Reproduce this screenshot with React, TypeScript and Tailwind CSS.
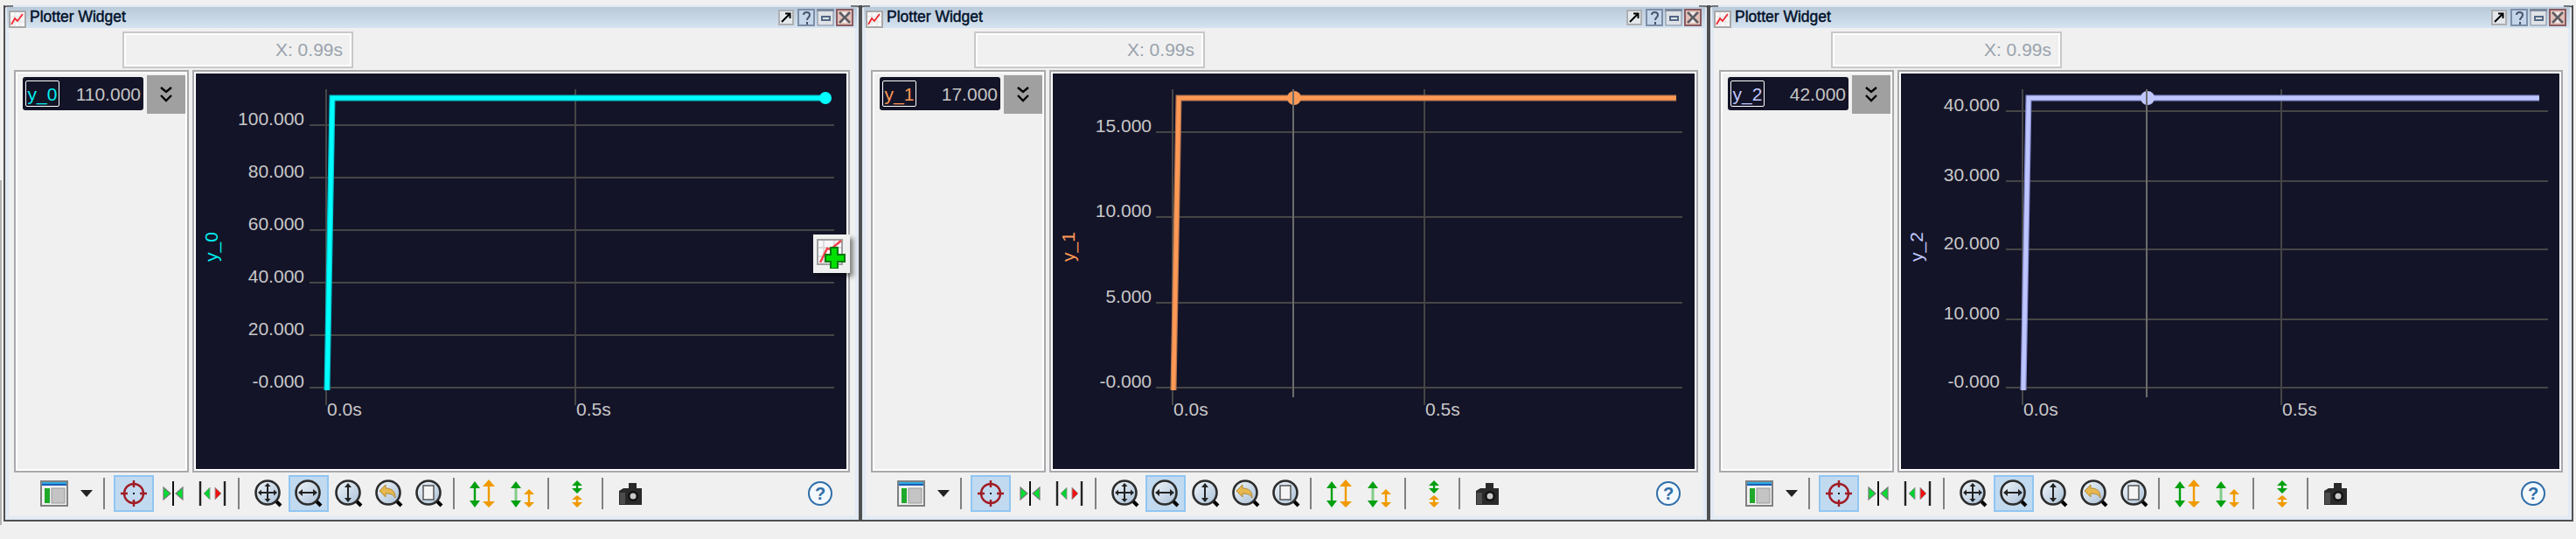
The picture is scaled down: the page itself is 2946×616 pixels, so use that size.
import React from "react";

const DARK = "#141428";

type Tick = [string, number];
type PanelData = {
  name: string;
  value: string;
  color: string;
  edge: string;
  labelColor: string;
  widthClass: string;
  xBoxClass: string;
  darkLeft: number;
  darkWidth: number;
  axisX: number;
  midX: number;
  endX: number;
  gridRight: number;
  gridLeft: number;
  labelRight: number;
  cross?: number;
  dotX: number;
  dotR: number;
  ticks: Tick[];
};

const panels: PanelData[] = [
  {
    name: "y_0", value: "110.000", color: "#00ffff", edge: "#00c4d0", labelColor: "#00f0f0",
    widthClass: "w-[980px]", xBoxClass: "ml-[130px]",
    darkLeft: 224, darkWidth: 744, axisX: 373, midX: 658, endX: 944, gridRight: 954, gridLeft: 354, labelRight: 348,
    dotX: 944, dotR: 7,
    ticks: [["100.000", 143], ["80.000", 203], ["60.000", 263], ["40.000", 323], ["20.000", 383], ["-0.000", 443]],
  },
  {
    name: "y_1", value: "17.000", color: "#ff9955", edge: "#b87850", labelColor: "#ff9955",
    widthClass: "w-[970px]", xBoxClass: "ml-[124px]",
    darkLeft: 1204, darkWidth: 735, axisX: 1341, midX: 1629, endX: 1917, gridRight: 1924, gridLeft: 1322, labelRight: 1317,
    cross: 1479, dotX: 1480, dotR: 8,
    ticks: [["15.000", 151], ["10.000", 248], ["5.000", 346], ["-0.000", 443]],
  },
  {
    name: "y_2", value: "42.000", color: "#bfc6ff", edge: "#8a90d4", labelColor: "#c0c8ff",
    widthClass: "w-[989px]", xBoxClass: "ml-[134px]",
    darkLeft: 2174, darkWidth: 754, axisX: 2313, midX: 2609, endX: 2904, gridRight: 2914, gridLeft: 2294, labelRight: 2287,
    cross: 2455, dotX: 2456, dotR: 8,
    ticks: [["40.000", 127], ["30.000", 207], ["20.000", 285], ["10.000", 365], ["-0.000", 443]],
  },
];

function Chart({ p }: { p: PanelData }) {
  const path = `M${p.axisX + 1} 446 L${p.axisX + 7} 112 L${p.endX} 112`;
  return (
    <svg
      width={p.darkWidth}
      height={452}
      viewBox={`${p.darkLeft} 84 ${p.darkWidth} 452`}
      className="block"
    >
      {p.ticks.map(([t, y]) => (
        <g key={t}>
          <line x1={p.gridLeft} x2={p.gridRight} y1={y} y2={y} stroke="#454545" strokeWidth="2" />
          <text x={p.labelRight} y={y} textAnchor="end" fill="#c8c8c8" fontSize="21">{t}</text>
        </g>
      ))}
      <line x1={p.axisX} x2={p.axisX} y1="102" y2="463" stroke="#454545" strokeWidth="2" />
      <line x1={p.midX} x2={p.midX} y1="102" y2="463" stroke="#454545" strokeWidth="2" />
      <text x={p.axisX + 1} y="475" fill="#c8c8c8" fontSize="21">0.0s</text>
      <text x={p.midX + 1} y="475" fill="#c8c8c8" fontSize="21">0.5s</text>
      <path d={path} fill="none" stroke={p.edge} strokeWidth="7" strokeLinejoin="miter" />
      <path d={path} fill="none" stroke={p.color} strokeWidth="4.5" strokeLinejoin="miter" />
      <circle cx={p.dotX} cy="112" r={p.dotR} fill={p.color} />
      {p.cross ? <line x1={p.cross} x2={p.cross} y1="102" y2="454" stroke="#6c6c6c" strokeWidth="2" /> : null}
      <text
        x={p.darkLeft + 25}
        y="282"
        textAnchor="middle"
        fill={p.labelColor}
        fontSize="21"
        transform={`rotate(-90 ${p.darkLeft + 25} 282)`}
      >
        {p.name}
      </text>
    </svg>
  );
}

function PlotGlyph({ size = 20 }: { size?: number }) {
  return (
    <svg width={size} height={size} viewBox="0 0 20 20" className="block shrink-0">
      <rect x="1" y="1" width="18" height="18" fill="#f8f8f8" stroke="#a8a8a8" strokeWidth="2" />
      <path d="M7 2v16M13 2v16M2 7h16M2 13h16" stroke="#e2e2e2" strokeWidth="1" />
      <path d="M3 16l4-7 3 3 6-8" fill="none" stroke="#f02830" strokeWidth="1.8" />
    </svg>
  );
}

function TitleButtons() {
  return (
    <div className="ml-auto flex items-center gap-[2px] pr-[2px]">
      <svg width="18" height="18" viewBox="0 0 18 18" className="block mr-[2px]">
        <rect x="1" y="1" width="16" height="16" fill="#e4e8ec" stroke="#aeb0b2" strokeWidth="2" />
        <path d="M4 14L13 5M8 4.500h5.500V10" fill="none" stroke="#000" strokeWidth="2" />
      </svg>
      <svg width="20" height="20" viewBox="0 0 20 20" className="block">
        <rect x="1" y="1" width="18" height="18" fill="#c4d6ea" stroke="#7c8ea8" strokeWidth="2" />
        <path d="M7 7c0-4 7-4 7 0 0 3-3 3-3 6M11 15v3" fill="none" stroke="#4a5468" strokeWidth="2" />
      </svg>
      <svg width="20" height="20" viewBox="0 0 20 20" className="block">
        <rect x="1" y="1" width="18" height="18" fill="#dfe2e6" stroke="#7c8a9e" strokeWidth="1" />
        <rect x="0" y="0" width="20" height="3" fill="#7c8a9e" />
        <rect x="6" y="9" width="9" height="4" fill="none" stroke="#526884" strokeWidth="2" />
      </svg>
      <svg width="20" height="20" viewBox="0 0 20 20" className="block">
        <rect x="1" y="1" width="18" height="18" fill="#e2c0b8" stroke="#8a5a60" strokeWidth="2" />
        <path d="M4 4l12 12M16 4L4 16" stroke="#5c5c64" strokeWidth="2.500" />
        <path d="M7 4l3 4 3-4M7 16l3-4 3 4" fill="#f0f0f0" />
      </svg>
    </div>
  );
}

function Chevrons() {
  return (
    <svg width="16" height="18" viewBox="0 0 16 18" className="block">
      <path d="M2 1l6 5 6-5M2 10l6 6 6-6" fill="none" stroke="#000" strokeWidth="2.400" />
    </svg>
  );
}

function Sep() {
  return <div className="w-[2px] h-[36px] bg-[#808080] shrink-0" />;
}

function Slot({ active, w = "w-[46px]", children }: { active?: boolean; w?: string; children: React.ReactNode }) {
  return (
    <div
      className={
        active
          ? `${w} h-[42px] shrink-0 flex items-center justify-center bg-[#c1daf0] border-2 border-[#90c6f2]`
          : `${w} h-[42px] shrink-0 flex items-center justify-center`
      }
    >
      {children}
    </div>
  );
}

function LayoutIcon() {
  return (
    <svg width="32" height="30" viewBox="0 0 32 30" className="block shrink-0">
      <rect x="1" y="1" width="30" height="28" fill="#f0f0f0" stroke="#808080" strokeWidth="2" />
      <rect x="2" y="2" width="28" height="2" fill="#33a8e0" />
      <rect x="2" y="4" width="28" height="2" fill="#1a5fb8" />
      <rect x="5" y="9" width="6" height="17" fill="#1fa82a" />
      <rect x="13" y="9" width="15" height="17" fill="#c4c4c4" stroke="#9a9a9a" />
    </svg>
  );
}

function Target() {
  return (
    <svg width="32" height="32" viewBox="0 0 32 32" className="block">
      <circle cx="16" cy="16" r="11" fill="none" stroke="#a01c24" strokeWidth="2.400" />
      <path d="M16 1v8M16 23v8M1 16h8M23 16h8" stroke="#a01c24" strokeWidth="2.400" />
      <rect x="15" y="15" width="2" height="2" fill="#111" />
    </svg>
  );
}

function MirrorIn() {
  return (
    <svg width="24" height="30" viewBox="0 0 24 30" className="block">
      <path d="M12 1v28" stroke="#111" strokeWidth="2" />
      <path d="M1 8l8 7-8 7z" fill="#00e030" stroke="#777" strokeWidth="1.200" />
      <path d="M23 8l-8 7 8 7z" fill="#00e030" stroke="#777" strokeWidth="1.200" />
    </svg>
  );
}

function MirrorOut() {
  return (
    <svg width="32" height="30" viewBox="0 0 32 30" className="block">
      <path d="M2 1v28M30 1v28" stroke="#222" strokeWidth="2.400" />
      <path d="M13 8l-7 7 7 7z" fill="#00d030" stroke="#999" strokeWidth="1" />
      <path d="M19 8l7 7-7 7z" fill="#f01010" stroke="#999" strokeWidth="1" />
    </svg>
  );
}

function Magnifier({ children }: { children: React.ReactNode }) {
  return (
    <svg width="32" height="32" viewBox="0 0 32 32" className="block">
      <defs>
        <linearGradient id="lens" x1="0" y1="0" x2="1" y2="1">
          <stop offset="0" stopColor="#f2f6fa" />
          <stop offset="1" stopColor="#a8bfd6" />
        </linearGradient>
      </defs>
      <path d="M24 24l6 6" stroke="#000" strokeWidth="4" />
      <circle cx="15" cy="15" r="13.500" fill="url(#lens)" stroke="#2c2c2c" strokeWidth="2.600" />
      {children}
    </svg>
  );
}

function GreenOrange() {
  return (
    <svg width="32" height="32" viewBox="0 0 32 32" className="block">
      <path d="M7 5v22" stroke="#00a010" strokeWidth="2.400" />
      <path d="M1 10l6-8 6 8zM1 24l6 8 6-8z" fill="#00a010" />
      <path d="M23 5v22" stroke="#f09a00" strokeWidth="2.400" />
      <path d="M16 8l7-8 7 8zM16 25l7 7 7-7z" fill="#f09a00" />
    </svg>
  );
}

function GreenOrangeSmall() {
  return (
    <svg width="29" height="32" viewBox="0 0 29 32" className="block">
      <path d="M7 5v22" stroke="#80cc88" strokeWidth="3" />
      <path d="M1 10l6-8 6 8zM1 24l6 8 6-8z" fill="#00a010" />
      <path d="M22 14v13" stroke="#f09a00" strokeWidth="2.400" />
      <path d="M16 17l6-6 6 6zM16 26l6 6 6-6z" fill="#f09a00" />
    </svg>
  );
}

function Stacked() {
  return (
    <svg width="12" height="32" viewBox="0 0 12 32" className="block">
      <path d="M6 4v10" stroke="#00a010" strokeWidth="2.400" />
      <path d="M0 7l6-6 6 6zM0 10l6 6 6-6z" fill="#00a010" />
      <path d="M6 19v9" stroke="#f09a00" strokeWidth="2.400" />
      <path d="M0 23l6-5 6 5zM0 26l6 6 6-6z" fill="#f09a00" />
    </svg>
  );
}

function Camera() {
  return (
    <svg width="26" height="26" viewBox="0 0 26 26" className="block">
      <path d="M0 10l5-3h6V1h9v6h6v19H0z" fill="#2a2a2a" />
      <rect x="1" y="12" width="6" height="13" fill="#4c4c4c" />
      <circle cx="16" cy="16" r="6" fill="#111" />
      <circle cx="16" cy="16" r="3.500" fill="#c8c8c8" />
    </svg>
  );
}

function Help() {
  return (
    <div className="ml-auto mr-[26px] w-[28px] h-[28px] shrink-0 rounded-full bg-[#f4f9fd] border-2 border-[#2f6ea8] flex items-center justify-center text-[20px] leading-none font-bold text-[#2f6ea8]">
      ?
    </div>
  );
}

function Toolbar() {
  return (
    <div className="h-[50px] flex items-center pb-[3px] pl-[36px]">
      <LayoutIcon />
      <svg width="14" height="8" viewBox="0 0 14 8" className="block ml-[14px] shrink-0">
        <path d="M0 0h14L7 8z" fill="#222" />
      </svg>
      <div className="ml-[12px]"><Sep /></div>
      <div className="ml-[10px]"><Slot active><Target /></Slot></div>
      <Slot w="w-[44px]"><MirrorIn /></Slot>
      <Slot><MirrorOut /></Slot>
      <div className="ml-[6px]"><Sep /></div>
      <div className="ml-[10px]">
        <Slot>
          <Magnifier>
            <path d="M15 6v18M6 15h18" stroke="#222" strokeWidth="2" />
            <path d="M15 4l-3.500 4h7zM15 26l-3.500-4h7zM4 15l4-3.500v7zM26 15l-4-3.500v7z" fill="#222" />
          </Magnifier>
        </Slot>
      </div>
      <Slot active>
        <Magnifier>
          <path d="M7 15h16" stroke="#222" strokeWidth="2" />
          <path d="M4 15l5-4v8zM26 15l-5-4v8z" fill="#222" />
        </Magnifier>
      </Slot>
      <Slot>
        <Magnifier>
          <path d="M15 7v16" stroke="#222" strokeWidth="2" />
          <path d="M15 4l-4 5h8zM15 26l-4-5h8z" fill="#222" />
        </Magnifier>
      </Slot>
      <Slot>
        <Magnifier>
          <path d="M5 13l7-7v4c7 0 11 3 11 11-2-4-5-5-11-5v4z" fill="#e8b850" stroke="#b08a30" strokeWidth="1" />
        </Magnifier>
      </Slot>
      <Slot>
        <Magnifier>
          <rect x="9" y="7" width="12" height="16" fill="#f4f4f4" stroke="#555" strokeWidth="1.500" />
        </Magnifier>
      </Slot>
      <div className="ml-[4px]"><Sep /></div>
      <div className="ml-[16px]"><GreenOrange /></div>
      <div className="ml-[15px]"><GreenOrangeSmall /></div>
      <div className="ml-[14px]"><Sep /></div>
      <div className="ml-[26px]"><Stacked /></div>
      <div className="ml-[22px]"><Sep /></div>
      <div className="ml-[18px]"><Camera /></div>
      <Help />
    </div>
  );
}

function Corner({ side }: { side: "left" | "right" }) {
  return (
    <svg
      width="12"
      height="10"
      viewBox="0 0 12 10"
      className={side === "left" ? "absolute top-0 left-[-2px]" : "absolute top-0 right-[-2px]"}
    >
      <path
        d={side === "left" ? "M1 10V4Q1 1 5 1H11" : "M11 10V4Q11 1 7 1H1"}
        fill="none"
        stroke="#505050"
        strokeWidth="1.500"
      />
    </svg>
  );
}

function Panel({ p }: { p: PanelData }) {
  return (
    <div className={`${p.widthClass} relative h-[590px] shrink-0 border-x-2 border-b-2 border-[#505050]`}>
      <Corner side="left" />
      <Corner side="right" />
      <div className="h-full flex flex-col border-x-4 border-t-2 border-b-4 border-[#e2eaf4] bg-[#f0f0f0]">
        <div className="h-[24px] shrink-0 flex items-end bg-gradient-to-b from-[#b8c9d9] to-[#d6e3f0] -mx-[2px] px-[2px]">
          <PlotGlyph />
          <span className="ml-[4px] self-center text-[17.5px] leading-none text-[#00102a] [-webkit-text-stroke:0.45px_#00102a]">
            Plotter Widget
          </span>
          <div className="self-center ml-auto">
            <TitleButtons />
          </div>
        </div>
        <div className="h-[48px] shrink-0 pt-[4px]">
          <div className={`${p.xBoxClass} w-[264px] h-[42px] border-2 border-[#c8c8c8]`}>
            <div className="h-full border-2 border-white flex items-center justify-end pr-[8px] text-[21px] text-[#9aa3ad]">
              X: 0.99s
            </div>
          </div>
        </div>
        <div className="h-[460px] shrink-0 flex gap-[4px] px-[6px]">
          <div className="w-[200px] shrink-0 border-2 border-[#a9a9ad]">
            <div className="h-full border-2 border-white flex items-start gap-[4px] pl-[6px] pt-[2px]">
              <div className="mt-[2px] w-[138px] h-[38px] shrink-0 rounded-[3px] flex items-center justify-between pl-[3px] pr-[3px] text-[21px] bg-[#141428]">
                <span
                  className="h-[30px] w-[39px] rounded-[2px] border border-white flex items-center justify-center leading-none"
                  style={{ color: p.labelColor }}
                >
                  {p.name}
                </span>
                <span className="text-[#c4c4c4] leading-none">{p.value}</span>
              </div>
              <div className="w-[44px] h-[44px] shrink-0 bg-[#a0a0a0] flex items-center justify-center">
                <Chevrons />
              </div>
            </div>
          </div>
          <div className="flex-1 min-w-0 border-2 border-[#a9a9ad]">
            <div className="h-full border-2 border-white overflow-hidden" style={{ backgroundColor: DARK }}>
              <Chart p={p} />
            </div>
          </div>
        </div>
        <Toolbar />
      </div>
    </div>
  );
}

export default function App() {
  return (
    <div className="relative w-[2946px] h-[616px] overflow-hidden bg-[#f0f0f0] flex items-start pt-[6px] font-['Liberation_Sans',Arial,sans-serif]">
      <div className="w-[2px] h-[394px] mt-[200px] mr-[2px] shrink-0 bg-[#b4b4b4]" />
      {panels.map((p) => (
        <Panel key={p.name} p={p} />
      ))}
      <div className="absolute left-[930px] top-[268px] w-[42px] h-[44px] bg-[#f0f0f0] shadow-[4px_4px_5px_rgba(0,0,0,0.45)] flex items-center justify-center">
        <svg width="34" height="34" viewBox="0 0 34 34" className="block">
          <rect x="1" y="1" width="28" height="28" fill="#f8f8f8" stroke="#a0a0a0" strokeWidth="2" />
          <path d="M8 2v26M20 2v26M2 10h26M2 20h26" stroke="#dcdcdc" strokeWidth="2" />
          <path d="M4 27l8-16 4 1 12-10" fill="none" stroke="#f04048" strokeWidth="2.500" />
          <path d="M16 10h8v8h8v8h-8v8h-8v-8H10v-8h6z" fill="#00e000" stroke="#007a10" strokeWidth="2" />
        </svg>
      </div>
    </div>
  );
}
